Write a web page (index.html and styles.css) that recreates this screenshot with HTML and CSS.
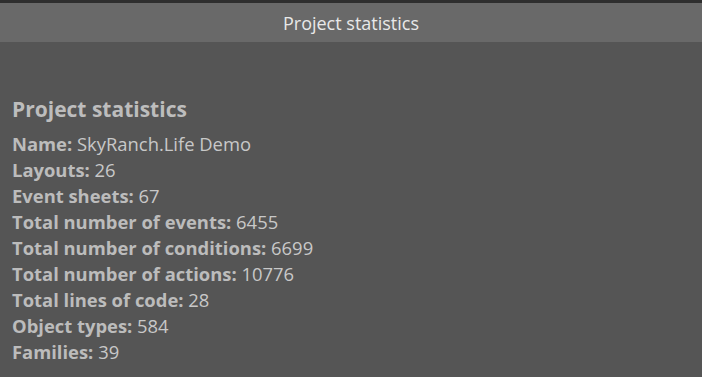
FILE: index.html
```html
<!DOCTYPE html>
<html>
<head>
<meta charset="utf-8">
<link rel="stylesheet" href="styles.css">
</head>
<body>
<div class="topstrip"></div>
<div class="titlebar">Project statistics</div>
<main class="content">
  <h1 class="heading">Project statistics</h1>
  <div class="row"><b>Name:</b> SkyRanch.Life Demo</div>
  <div class="row"><b>Layouts:</b> 26</div>
  <div class="row"><b>Event sheets:</b> 67</div>
  <div class="row"><b>Total number of events:</b> 6455</div>
  <div class="row"><b>Total number of conditions:</b> 6699</div>
  <div class="row"><b>Total number of actions:</b> 10776</div>
  <div class="row"><b>Total lines of code:</b> 28</div>
  <div class="row"><b>Object types:</b> 584</div>
  <div class="row"><b>Families:</b> 39</div>
</main>
</body>
</html>
```
FILE: styles.css
```css
html, body {
  margin: 0;
  padding: 0;
  background: #555555;
  height: 100%;
  overflow: hidden;
}
body {
  font-family: "Open Sans", "Noto Sans", sans-serif;
  color: #c8c8c8;
}
.topstrip {
  height: 3px;
  background: #2e2e2e;
}
.titlebar {
  height: 39px;
  background: #696969;
  color: #e8e8e8;
  font-size: 18px;
  line-height: 41px;
  text-align: center;
}
.content {
  padding: 54px 12px 0 12px;
}
.heading {
  margin: 0 0 9px 0;
  font-size: 21px;
  font-weight: 700;
  line-height: 26px;
  color: #bdbdbd;
}
.row {
  font-size: 18.4px;
  line-height: 26px;
  white-space: nowrap;
}
.row b {
  color: #bcbcbc;
  font-weight: 700;
}
```
